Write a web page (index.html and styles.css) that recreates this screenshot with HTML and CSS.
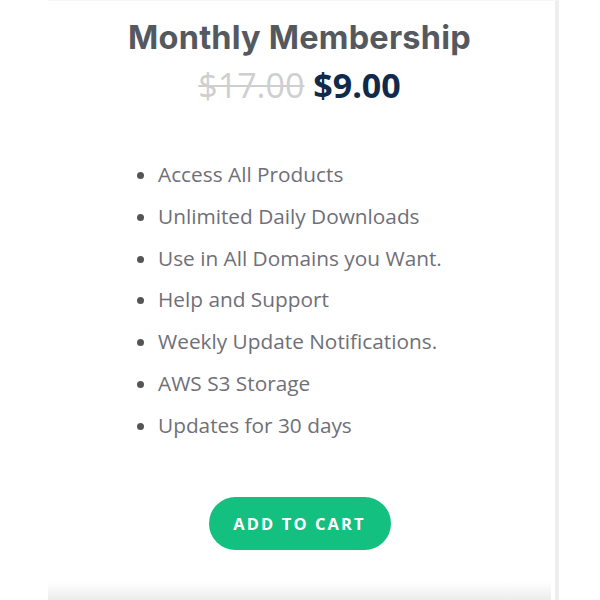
FILE: index.html
```html
<!DOCTYPE html>
<html>
<head>
<meta charset="utf-8">
<link rel="stylesheet" href="styles.css">
</head>
<body>
<div class="card">
  <h2 class="title">Monthly Membership</h2>
  <div class="price"><del class="old">$17.00</del> <span class="new">$9.00</span></div>
  <ul class="features">
    <li>Access All Products</li>
    <li>Unlimited Daily Downloads</li>
    <li>Use in All Domains you Want.</li>
    <li>Help and Support</li>
    <li>Weekly Update Notifications.</li>
    <li>AWS S3 Storage</li>
    <li>Updates for 30 days</li>
  </ul>
  <div class="actions"><a class="btn">ADD TO CART</a></div>
  <div class="card-foot"></div>
</div>
</body>
</html>
```
FILE: styles.css
```css
html, body {
  margin: 0;
  padding: 0;
  background: #fff;
}
.card {
  margin-left: 48px;
  width: 511px;
  height: 600px;
  padding-right: 4px;
  border-right: 4px solid #eeeeee;
  border-top: 1px solid #f6f6f6;
  box-sizing: border-box;
  display: flex;
  flex-direction: column;
  align-items: stretch;
}
.title {
  margin: 13px 0 0 0;
  text-align: center;
  font-family: "Inter", sans-serif;
  font-weight: 700;
  font-size: 32.5px;
  letter-spacing: 0.2px;
  line-height: 48px;
  color: #54595f;
}
.price {
  text-align: center;
  font-family: "Open Sans", sans-serif;
  font-size: 34px;
  line-height: 46px;
  margin-top: 0;
}
.old {
  color: #cfcfcf;
  text-decoration: line-through;
  text-decoration-thickness: 2px;
}
.new {
  color: #0f2a4a;
  font-weight: 700;
}
.features {
  margin: 46px 0 0 110px;
  padding: 0;
  font-family: "Open Sans", sans-serif;
  font-size: 20.8px;
  line-height: 41.8px;
  color: #6f6f78;
}
.features li::marker {
  color: #555;
}
.actions {
  display: flex;
  justify-content: center;
  margin-top: 50px;
}
.btn {
  display: flex;
  align-items: center;
  justify-content: center;
  width: 182px;
  height: 53px;
  border-radius: 27px;
  background: #13c07f;
  color: #fff;
  font-family: "Open Sans", sans-serif;
  font-weight: 700;
  font-size: 16.5px;
  letter-spacing: 2.1px;
}
.card-foot {
  margin-top: auto;
  height: 18px;
  background: linear-gradient(#fff, #ececec);
}
```
